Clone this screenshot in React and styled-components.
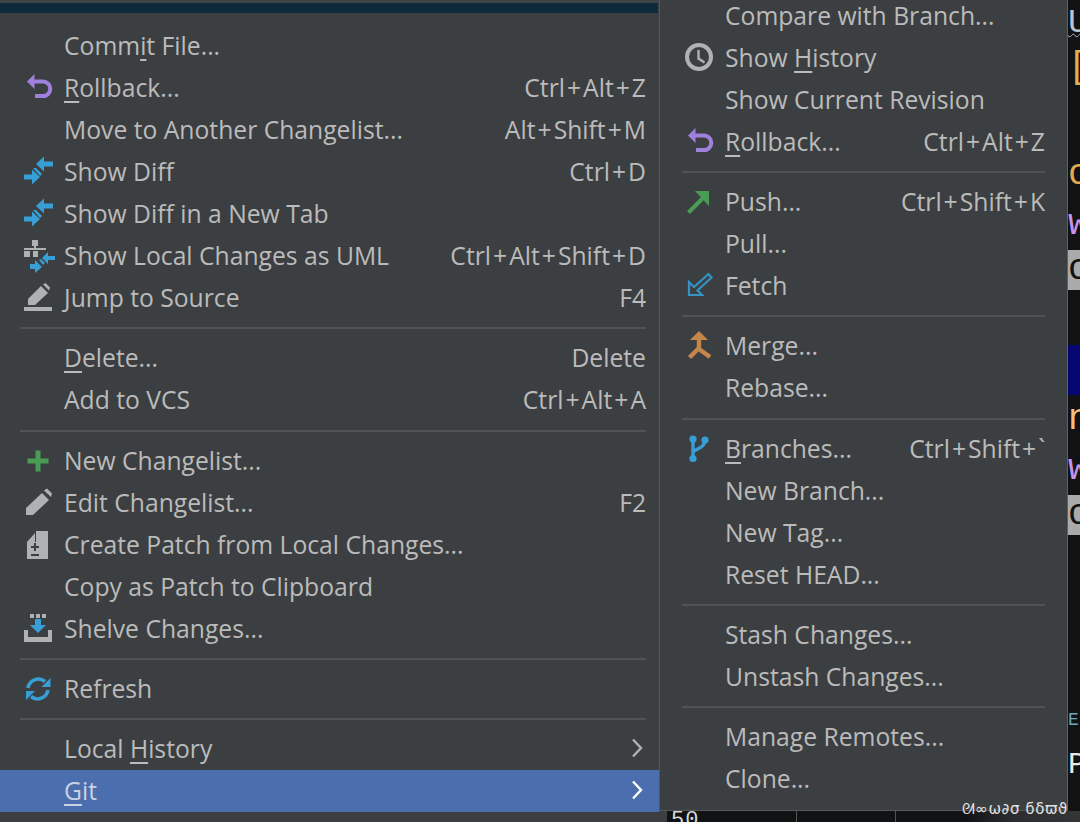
import React from 'react';
import styled, { createGlobalStyle } from 'styled-components';

const GlobalStyle = createGlobalStyle`
  html, body {
    margin: 0;
    padding: 0;
    height: 100%;
    overflow: hidden;
    background: #111213;
  }
`;

const Stage = styled.div`
  position: relative;
  display: flex;
  width: 1080px;
  height: 822px;
  overflow: hidden;
  font-family: 'Open Sans', 'Noto Sans', sans-serif;
  font-size: 24.7px;
  color: #bbbbbb;
`;
const LeftColumn = styled.div`
  display: flex;
  flex-direction: column;
  flex: 0 0 659px;
  height: 822px;
  background: #3c3f41;
`;
const TitleStrip = styled.div`
  height: 10px;
  flex: none;
  background: #0e2a3d;
  border-top: 3px solid #3f4447;
  margin-right: 1px;
`;
const Menu = styled.div`
  display: flex;
  flex-direction: column;
  padding-top: ${(props) => props.$top || 0}px;
`;
const RightColumn = styled.div`
  display: flex;
  flex-direction: column;
  flex: 1;
  min-width: 0;
`;
const RightTop = styled.div`
  display: flex;
  height: 811px;
  flex: none;
`;
const SubPanel = styled.div`
  flex: 0 0 409px;
  box-sizing: border-box;
  height: 816px;
  margin-top: -5px;
  background: #3c3f41;
  border-left: 1px solid #55585a;
  border-right: 1px solid #5e6163;
  border-bottom: 1px solid #55585a;
`;
const Row = styled.div`
  display: flex;
  align-items: center;
  height: 42px;
  flex: none;
  padding: ${(props) => (props.$sub ? '0 22px 0 23px' : '0 13px 0 22px')};
  background: ${(props) => (props.$selected ? '#4b6eaf' : 'transparent')};
  color: ${(props) => (props.$selected ? '#c9d2e2' : '#bbbbbb')};
`;
const IconSlot = styled.span`
  display: flex;
  flex: 0 0 32px;
  width: 32px;
  height: 32px;
  margin-right: 10px;
`;
const Label = styled.span`
  white-space: nowrap;
  padding-bottom: 2px;
`;
const Mnemonic = styled.span`
  text-decoration: underline;
  text-decoration-thickness: 2px;
  text-underline-offset: 4px;
`;
const Shortcut = styled.span`
  margin-left: auto;
  padding-bottom: 2px;
  white-space: nowrap;
`;
const PlusSign = styled.span`
  margin: 0 2px;
`;
const Chevron = styled.svg`
  margin: 0 3px 3px auto;
  width: 12px;
  height: 20px;
  fill: none;
  stroke: ${(props) => (props.$selected ? '#ffffff' : '#afb1b3')};
  stroke-width: 2.4;
`;
const Separator = styled.div`
  display: flex;
  align-items: center;
  height: ${(props) => (props.$tall ? 19 : 18)}px;
  padding: ${(props) => (props.$sub ? '0 22px' : '0 13px 0 20px')};
  &::after {
    content: '';
    flex: 1;
    height: 2px;
    background: #505355;
  }
`;
const CodePane = styled.div`
  flex: 1;
  display: flex;
  flex-direction: column;
  overflow: hidden;
  background: #111213;
  font-family: 'Liberation Mono', monospace;
`;
const CodeLine = styled.div`
  flex: none;
  height: ${(props) => props.$h}px;
  line-height: ${(props) => props.$h}px;
  font-size: ${(props) => props.$size || 36}px;
  color: ${(props) => props.$color || '#bbbbbb'};
  background: ${(props) => props.$bg || 'transparent'};
  text-decoration: ${(props) => (props.$wavy ? 'underline wavy 1px #aab4c0' : 'none')};
  white-space: nowrap;
`;
const BottomStrip = styled.div`
  display: flex;
  flex: 1;
  align-items: flex-start;
  background: linear-gradient(90deg, #111213 0 72%, #2b2d2e 84%, #333638 100%);
  border-left: 8px solid #3c3f41;
  font-family: 'Liberation Mono', monospace;
  font-size: 22px;
  line-height: 22px;
  color: #d8d8d8;
  padding-left: 4px;
  overflow: hidden;
`;
const StripNumber = styled.span`
  margin-top: -1px;
  letter-spacing: 1px;
`;
const Tick = styled.span`
  width: 1px;
  height: 12px;
  flex: none;
  margin-left: ${(props) => props.$gap}px;
  background: #4a5a4a;
`;
const Watermark = styled.div`
  position: absolute;
  right: 12px;
  bottom: 3px;
  font-family: 'DejaVu Sans', sans-serif;
  font-size: 15px;
  line-height: 20px;
  letter-spacing: 0.6px;
  color: #e2e2e2;
  white-space: nowrap;
`;

const Svg = styled.svg.attrs({ viewBox: '0 0 32 32', width: 32, height: 32 })`
  display: block;
  overflow: visible;
`;

const BLUE = '#389fd6';
const GREY = '#afb1b3';
const PURPLE = '#9f80dc';
const GREEN = '#499c54';
const ORANGE = '#c4864a';

const RollbackIcon = () => (
  <Svg>
    <polygon points="5,9.5 12.5,2 12.5,17" fill={PURPLE} />
    <path d="M12 9.5h9a7.3 7.3 0 0 1 0 14.6h-8" fill="none" stroke={PURPLE} strokeWidth="4" />
  </Svg>
);
const DiffIcon = () => (
  <Svg>
    <polygon points="14,8 22,0.5 22,5.5 31,5.5 31,10.5 22,10.5 22,15.5" fill={BLUE} />
    <polygon points="18,21 10,13.5 10,18.5 2,18.5 2,23.5 10,23.5 10,28.5" fill={BLUE} />
    <polygon points="11,12 14,12 20,18 18,20" fill={BLUE} />
  </Svg>
);
const UmlIcon = () => (
  <Svg>
    <rect x="10" y="0" width="6" height="6" fill={GREY} />
    <rect x="12" y="6" width="2" height="3" fill={GREY} />
    <rect x="2" y="8" width="22" height="2" fill={GREY} />
    <rect x="2" y="11" width="6" height="6" fill={GREY} />
    <rect x="11" y="11" width="5" height="6" fill={GREY} />
    <polygon points="20,18 26,12 26,16 33,16 33,20 26,20 26,24" fill={BLUE} />
    <polygon points="20,27 13,20 13,24 8,24 8,29 13,29 13,33" fill={BLUE} />
    <polygon points="17,20 19,19 23,23 21,25" fill={BLUE} />
  </Svg>
);
const JumpIcon = () => (
  <Svg>
    <polygon points="6,23 6,17 19,4 26,11 13,23" fill={GREY} />
    <polygon points="21,2.5 23.5,1 28,5.5 27,8.5" fill={GREY} />
    <rect x="2" y="25" width="28" height="4" fill={GREY} />
  </Svg>
);
const PlusIcon = () => (
  <Svg>
    <rect x="13.5" y="5.5" width="5" height="21" fill={GREEN} />
    <rect x="5.5" y="13.5" width="21" height="5" fill={GREEN} />
  </Svg>
);
const EditIcon = () => (
  <Svg>
    <polygon points="4,28 4,21 20,6 27,13 11,28" fill={GREY} />
    <polygon points="22,3.5 25,1.5 30,6.5 29,10" fill={GREY} />
  </Svg>
);
const PatchIcon = () => (
  <Svg>
    <polygon points="5,30 5,13 13,4 13,13 14,13 14,2 26,2 26,30" fill={GREY} />
    <rect x="9" y="17" width="8" height="2" fill="#3c3f41" />
    <rect x="12" y="14" width="2" height="8" fill="#3c3f41" />
    <rect x="9" y="25" width="8" height="2" fill="#3c3f41" />
  </Svg>
);
const ShelveIcon = () => (
  <Svg>
    <rect x="8" y="1" width="4" height="4" fill={GREY} />
    <rect x="14" y="1" width="4" height="4" fill={GREY} />
    <rect x="20" y="1" width="4" height="4" fill={GREY} />
    <polygon points="13,6 19,6 19,12 24,12 16,20 8,12 13,12" fill={BLUE} />
    <path d="M2 17h4v7h20v-7h4v12H2z" fill={GREY} />
  </Svg>
);
const RefreshIcon = () => (
  <Svg>
    <path d="M6 15A10.5 10.5 0 0 1 23 8.5" fill="none" stroke={BLUE} strokeWidth="3.6" />
    <polygon points="28.5,5 28.5,14 19.5,14" fill={BLUE} />
    <path d="M26 17A10.5 10.5 0 0 1 9 23.5" fill="none" stroke={BLUE} strokeWidth="3.6" />
    <polygon points="4,27 4,18 13,18" fill={BLUE} />
  </Svg>
);
const ClockIcon = () => (
  <Svg>
    <circle cx="16" cy="15" r="12" fill="none" stroke={GREY} strokeWidth="4" />
    <path d="M15.5 8v8.5l6 4" fill="none" stroke={GREY} strokeWidth="2.4" />
  </Svg>
);
const PushIcon = () => (
  <Svg>
    <path d="M5.5 26.5L22 10" fill="none" stroke={GREEN} strokeWidth="4" />
    <polygon points="12,5 26,5 26,20" fill={GREEN} />
  </Svg>
);
const FetchIcon = () => (
  <Svg>
    <polygon
      points="6,12 6,25 19,25 14.5,20.5 28.5,7.5 25.5,4 11,17"
      fill="none"
      stroke="#3592c4"
      strokeWidth="2.2"
    />
  </Svg>
);
const MergeIcon = () => (
  <Svg>
    <polygon points="16,1 25,10 7,10" fill={ORANGE} />
    <path d="M16 9v10M16 18L6.5 27.5M16 19L27 27" fill="none" stroke={ORANGE} strokeWidth="4.4" />
  </Svg>
);
const BranchesIcon = () => (
  <Svg>
    <path d="M10 6v19M22 7c0 7-7 8-12 12" fill="none" stroke={BLUE} strokeWidth="3.4" />
    <circle cx="10" cy="6" r="3.6" fill={BLUE} />
    <circle cx="22" cy="7" r="3.6" fill={BLUE} />
    <circle cx="10" cy="25.5" r="3.6" fill={BLUE} />
  </Svg>
);

const MenuRow = ({ icon: Icon, shortcut, arrow, selected, sub, children }) => (
  <Row $sub={sub} $selected={selected}>
    <IconSlot>{Icon && <Icon />}</IconSlot>
    <Label>{children}</Label>
    {shortcut && (
      <Shortcut>
        {shortcut.split('+').map((key, i) => (
          <React.Fragment key={key}>
            {i > 0 && <PlusSign>+</PlusSign>}
            {key}
          </React.Fragment>
        ))}
      </Shortcut>
    )}
    {arrow && (
      <Chevron viewBox="0 0 12 20" $selected={selected}>
        <polyline points="2,1.5 10,10 2,18.5" />
      </Chevron>
    )}
  </Row>
);

const App = () => {
  return (
    <>
      <GlobalStyle />
      <Stage>
        <LeftColumn>
          <TitleStrip />
          <Menu $top={12}>
            <MenuRow>Comm<Mnemonic>i</Mnemonic>t File...</MenuRow>
            <MenuRow icon={RollbackIcon} shortcut="Ctrl+Alt+Z"><Mnemonic>R</Mnemonic>ollback...</MenuRow>
            <MenuRow shortcut="Alt+Shift+M">Move to Another Changelist...</MenuRow>
            <MenuRow icon={DiffIcon} shortcut="Ctrl+D">Show Diff</MenuRow>
            <MenuRow icon={DiffIcon}>Show Diff in a New Tab</MenuRow>
            <MenuRow icon={UmlIcon} shortcut="Ctrl+Alt+Shift+D">Show Local Changes as UML</MenuRow>
            <MenuRow icon={JumpIcon} shortcut="F4">Jump to Source</MenuRow>
            <Separator />
            <MenuRow shortcut="Delete"><Mnemonic>D</Mnemonic>elete...</MenuRow>
            <MenuRow shortcut="Ctrl+Alt+A">Add to VCS</MenuRow>
            <Separator $tall />
            <MenuRow icon={PlusIcon}>New Changelist...</MenuRow>
            <MenuRow icon={EditIcon} shortcut="F2">Edit Changelist...</MenuRow>
            <MenuRow icon={PatchIcon}>Create Patch from Local Changes...</MenuRow>
            <MenuRow>Copy as Patch to Clipboard</MenuRow>
            <MenuRow icon={ShelveIcon}>Shelve Changes...</MenuRow>
            <Separator />
            <MenuRow icon={RefreshIcon}>Refresh</MenuRow>
            <Separator />
            <MenuRow arrow>Local <Mnemonic>H</Mnemonic>istory</MenuRow>
            <MenuRow arrow selected><Mnemonic>G</Mnemonic>it</MenuRow>
          </Menu>
        </LeftColumn>
        <RightColumn>
          <RightTop>
            <SubPanel>
              <Menu>
                <MenuRow sub>Compare with Branch...</MenuRow>
                <MenuRow sub icon={ClockIcon}>Show <Mnemonic>H</Mnemonic>istory</MenuRow>
                <MenuRow sub>Show Current Revision</MenuRow>
                <MenuRow sub icon={RollbackIcon} shortcut="Ctrl+Alt+Z"><Mnemonic>R</Mnemonic>ollback...</MenuRow>
                <Separator $sub />
                <MenuRow sub icon={PushIcon} shortcut="Ctrl+Shift+K">Push...</MenuRow>
                <MenuRow sub>Pull...</MenuRow>
                <MenuRow sub icon={FetchIcon}>Fetch</MenuRow>
                <Separator $sub />
                <MenuRow sub icon={MergeIcon}>Merge...</MenuRow>
                <MenuRow sub>Rebase...</MenuRow>
                <Separator $sub $tall />
                <MenuRow sub icon={BranchesIcon} shortcut="Ctrl+Shift+`"><Mnemonic>B</Mnemonic>ranches...</MenuRow>
                <MenuRow sub>New Branch...</MenuRow>
                <MenuRow sub>New Tag...</MenuRow>
                <MenuRow sub>Reset HEAD...</MenuRow>
                <Separator $sub />
                <MenuRow sub>Stash Changes...</MenuRow>
                <MenuRow sub>Unstash Changes...</MenuRow>
                <Separator $sub />
                <MenuRow sub>Manage Remotes...</MenuRow>
                <MenuRow sub>Clone...</MenuRow>
              </Menu>
            </SubPanel>
            <CodePane>
              <CodeLine $h={46} $size={34} $color="#b8c4d4" $wavy>U</CodeLine>
              <CodeLine $h={44} $color="#e0b050">[</CodeLine>
              <CodeLine $h={60} />
              <CodeLine $h={50} $color="#e5a84f">o</CodeLine>
              <CodeLine $h={50} $color="#c792ea">w</CodeLine>
              <CodeLine $h={40} $bg="#aaaaaa" $color="#111213">o</CodeLine>
              <CodeLine $h={55} />
              <CodeLine $h={50} $bg="#060672" />
              <CodeLine $h={50} $color="#f0c080">n</CodeLine>
              <CodeLine $h={50} $color="#c792ea">w</CodeLine>
              <CodeLine $h={40} $bg="#aaaaaa" $color="#111213">o</CodeLine>
              <CodeLine $h={165} />
              <CodeLine $h={40} $size={18} $color="#6fa8b8">E</CodeLine>
              <CodeLine $h={50} $size={30} $color="#e8e8e8">P</CodeLine>
            </CodePane>
          </RightTop>
          <BottomStrip>
            <StripNumber>50</StripNumber>
            <Tick $gap={97} />
            <Tick $gap={98} />
          </BottomStrip>
        </RightColumn>
        <Watermark>ᘛ∞ω∂σ ϭδϖϑ</Watermark>
      </Stage>
    </>
  );
};

export default App;
